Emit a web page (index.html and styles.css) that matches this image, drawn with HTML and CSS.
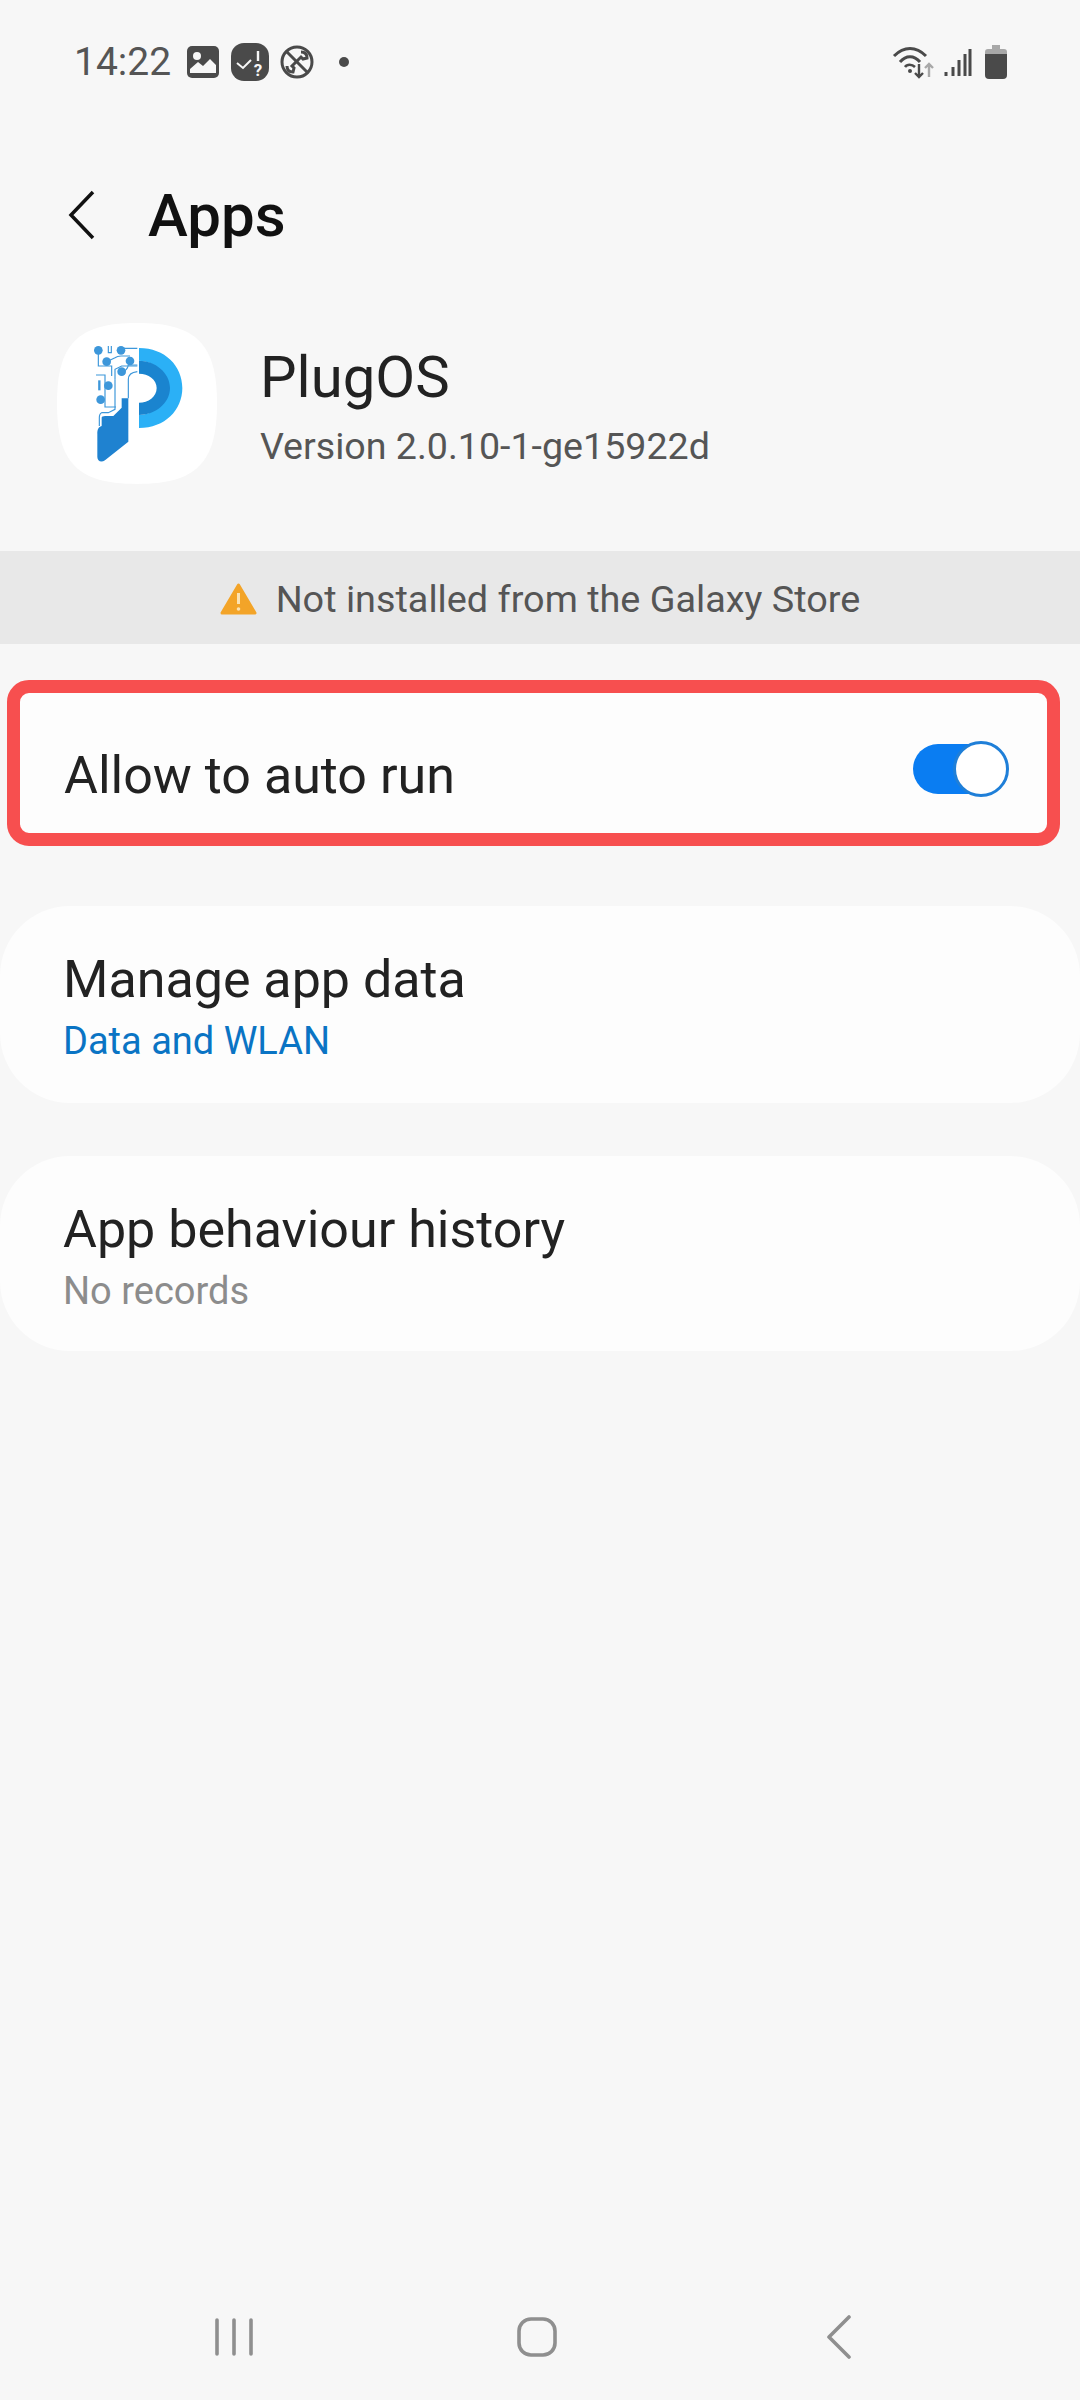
FILE: index.html
```html
<!DOCTYPE html>
<html lang="en">
  <head>
    <meta charset="UTF-8" />
    <meta name="viewport" content="width=device-width, initial-scale=1.0" />
    <title>Apps</title>
    <link rel="stylesheet" href="styles.css">
  </head>
  <body>
    <div class="screen">
      <div class="status-bar">
        <span class="time">14:22</span>
        <svg class="st-image" width="32" height="32" viewBox="0 0 32 32">
          <rect width="32" height="32" rx="5" fill="#4a4a4a" />
          <circle cx="10" cy="10" r="4" fill="#f7f7f7" />
          <path d="M3 27V23L11 16L16 20L23 13L29 19V27Z" fill="#f7f7f7" />
        </svg>
        <svg class="st-check" width="38" height="38" viewBox="0 0 38 38">
          <rect width="38" height="38" rx="13" fill="#4a4a4a" />
          <path d="M6 20L12 25L20 17" fill="none" stroke="#f7f7f7" stroke-width="2" />
          <path d="M27 8V18" stroke="#f7f7f7" stroke-width="2.4" />
          <text x="27" y="33" class="st-q">?</text>
        </svg>
        <svg class="st-call" width="34" height="34" viewBox="0 0 34 34">
          <circle cx="17" cy="17" r="15" fill="none" stroke="#4a4a4a" stroke-width="3" />
          <path d="M7 7L27 27" stroke="#4a4a4a" stroke-width="3" />
          <path d="M21 7C25 7 27 9 27 13L23 14L21 12L12 21L14 23L13 27C9 27 7 25 7 21" fill="none" stroke="#4a4a4a" stroke-width="3" />
        </svg>
        <span class="st-dot"></span>
        <span class="st-space"></span>
        <svg class="st-wifi" width="44" height="36" viewBox="0 0 44 36">
          <path d="M2 12C12 2 24 2 34 12" fill="none" stroke="#4a4a4a" stroke-width="3" />
          <path d="M8 18C14 11 22 11 28 18" fill="none" stroke="#4a4a4a" stroke-width="3" />
          <path d="M13 23C15 20 20 20 23 23" fill="none" stroke="#4a4a4a" stroke-width="2.5" />
          <circle cx="18" cy="27" r="2" fill="#4a4a4a" />
          <path d="M27 20V33M23 29L27 33L31 29" fill="none" stroke="#4a4a4a" stroke-width="2.4" />
          <path d="M37 33V20M33 24L37 20L41 24" fill="none" stroke="#a8a8a8" stroke-width="2.4" />
        </svg>
        <svg class="st-signal" width="28" height="28" viewBox="0 0 28 28">
          <path d="M2 24V28M9 19V28M15 12V28M21 6V28M26 1V28" stroke="#4a4a4a" stroke-width="3" />
        </svg>
        <svg class="st-battery" width="22" height="34" viewBox="0 0 22 34">
          <path d="M7 0H15V4H19Q22 4 22 7V12H0V7Q0 4 3 4H7Z" fill="#a8a8a8" />
          <path d="M0 9H22V30Q22 34 18 34H4Q0 34 0 30Z" fill="#4a4a4a" />
        </svg>
      </div>

      <div class="top-bar">
        <svg width="30" height="50" viewBox="0 0 30 50">
          <path d="M26 2L4 25L26 48" fill="none" stroke="#111" stroke-width="3.5" />
        </svg>
        <h1>Apps</h1>
      </div>

      <div class="app-head">
        <svg class="app-icon" width="160" height="161" viewBox="51 66 480 483">
          <path d="M291 66C470 66 531 130 531 307C531 485 470 549 291 549C112 549 51 485 51 307C51 130 112 66 291 66Z" fill="#fff" />
          <path d="M297 141C375 141 427 195 427 261C427 327 375 381 297 381V342A81 81 0 0 0 297 179Z" fill="#2bb0f6" />
          <path d="M297 179C345 179 390 215 390 261C390 307 345 342 297 342V305C325 305 350 288 350 261C350 235 325 218 297 218Z" fill="#1a84cf" />
          <path d="M172 400C172 385 175 378 185 375V350Q185 345 195 345H220L245 320V292H265V422L195 478C183 486 172 480 172 468Z" fill="#1f82d0" />
          <g fill="none" stroke="#3d97da" stroke-width="3.5">
            <path d="M175 148V195H215V225" />
            <path d="M200 182L225 170Q232 165 243 165H270" />
            <path d="M292 142H243M292 195H245L225 205V235" />
            <path d="M292 192H265Q262 210 245 212" />
            <path d="M168 222H195V318H228" />
            <path d="M225 235V325L205 335H185Q178 338 178 350V375" />
            <path d="M265 292V235Q265 215 292 212" />
            <path d="M205 135V155H214V135" />
            <path d="M178 238V268" stroke-width="7" />
          </g>
          <g fill="#3d97da">
            <circle cx="175" cy="148" r="13" />
            <circle cx="243" cy="148" r="13" />
            <circle cx="200" cy="182" r="13" />
            <circle cx="270" cy="180" r="13" />
            <circle cx="245" cy="212" r="13" />
            <circle cx="205" cy="254" r="13" />
            <circle cx="182" cy="296" r="13" />
          </g>
        </svg>
        <div class="app-info">
          <div class="app-name">PlugOS</div>
          <div class="app-version">Version 2.0.10-1-ge15922d</div>
        </div>
      </div>

      <div class="notice">
        <svg width="37" height="32" viewBox="0 0 37 32">
          <path d="M18.5 2L35 30H2Z" fill="#f3a428" stroke="#f3a428" stroke-width="3" stroke-linejoin="round" />
          <path d="M18.5 10V21" stroke="#fbe3b4" stroke-width="3" />
          <circle cx="18.5" cy="26" r="1.8" fill="#fbe3b4" />
        </svg>
        <span>Not installed from the Galaxy Store</span>
      </div>

      <div class="row row-marked">
        <span class="row-title">Allow to auto run</span>
        <span class="toggle"><span class="knob"></span></span>
      </div>

      <div class="card">
        <div class="row-title">Manage app data</div>
        <div class="row-sub link">Data and WLAN</div>
      </div>

      <div class="card card-last">
        <div class="row-title">App behaviour history</div>
        <div class="row-sub">No records</div>
      </div>

      <div class="nav-bar">
        <svg width="38" height="38" viewBox="0 0 38 38">
          <path d="M2 2V36M19 2V36M36 2V36" stroke="#8f8f8f" stroke-width="3.6" stroke-linecap="round" />
        </svg>
        <svg class="nav-home" width="40" height="40" viewBox="0 0 40 40">
          <rect x="2" y="2" width="36" height="36" rx="12" fill="none" stroke="#8f8f8f" stroke-width="3.6" />
        </svg>
        <svg width="26" height="44" viewBox="0 0 26 44">
          <path d="M23 2L3 22L23 42" fill="none" stroke="#8f8f8f" stroke-width="3.6" stroke-linecap="round" stroke-linejoin="round" />
        </svg>
      </div>
    </div>
  </body>
</html>
```

FILE: styles.css
```css
* {
  box-sizing: border-box;
}
body {
  margin: 0;
  font-family: Roboto, "Liberation Sans", sans-serif;
  background-color: #f7f7f7;
  color: #222;
}
.screen {
  display: flex;
  flex-direction: column;
  height: 2400px;
  overflow: hidden;
}
.status-bar {
  display: flex;
  align-items: center;
  height: 44px;
  margin-top: 40px;
  padding: 0 73px 0 74px;
}
.time {
  font-size: 39px;
  color: #555;
  margin-right: 16px;
}
.st-image {
  margin-right: 12px;
}
.st-check {
  margin-right: 11px;
}
.st-dot {
  width: 10px;
  height: 10px;
  margin-left: 25px;
  border-radius: 50%;
  background: #4a4a4a;
}
.st-space {
  flex: 1;
}
.st-q {
  font-size: 17px;
  font-weight: 700;
  fill: #f7f7f7;
  text-anchor: middle;
}
.st-signal {
  margin-left: 8px;
}
.st-battery {
  margin-left: 13px;
}
.top-bar {
  display: flex;
  align-items: center;
  height: 70px;
  margin-top: 96px;
  padding-left: 67px;
}
h1 {
  margin: 0 0 0 51px;
  font-size: 60px;
  font-weight: 500;
  color: #111;
}
.app-head {
  display: flex;
  align-items: center;
  margin-top: 73px;
  padding-left: 57px;
}
.app-info {
  margin-left: 43px;
  padding-top: 4px;
}
.app-name {
  font-size: 58px;
  line-height: 66px;
}
.app-version {
  font-size: 37.6px;
  line-height: 44px;
  margin-top: 14px;
  color: #555;
}
.notice {
  display: flex;
  align-items: center;
  justify-content: center;
  gap: 19px;
  height: 93px;
  margin-top: 67px;
  padding-top: 3px;
  background-color: #e8e8e8;
  font-size: 37.8px;
  color: #555;
}
.row-marked {
  display: flex;
  align-items: center;
  justify-content: space-between;
  height: 166px;
  margin: 36px 20px 0 7px;
  padding: 12px 38px 0 44px;
  background: #fdfdfd;
  border: 13px solid #f74f4f;
  border-radius: 22px;
}
.row-marked .row-title {
  padding-top: 14px;
}
.row-title {
  font-size: 52px;
  line-height: 60px;
}
.row-sub {
  font-size: 38px;
  line-height: 44px;
  margin-top: 9px;
  color: #8c8c8c;
}
.row-sub.link {
  color: #0a74c4;
}
.toggle {
  display: block;
  position: relative;
  width: 86px;
  height: 50px;
  margin-right: 10px;
  border-radius: 25px;
  background: #0a7df2;
}
.knob {
  position: absolute;
  top: -3px;
  right: -10px;
  width: 56px;
  height: 56px;
  border-radius: 50%;
  background: #fff;
  border: 3px solid #1f7fd8;
}
.card {
  height: 197px;
  margin-top: 60px;
  padding: 44px 63px 0;
  background: #fdfdfd;
  border-radius: 70px;
}
.card-last {
  height: 195px;
  margin-top: 53px;
}
.nav-bar {
  display: flex;
  align-items: center;
  justify-content: space-between;
  margin-top: auto;
  height: 44px;
  margin-bottom: 41px;
  padding: 0 228px 0 215px;
}
.nav-home {
  margin-right: 6px;
}
```
